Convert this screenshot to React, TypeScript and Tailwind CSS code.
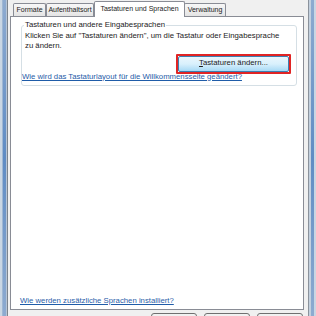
import React from "react";

const font = { fontFamily: '"Liberation Sans", Arial, sans-serif' };

function Tab({ label, active }: { label: string; active?: boolean }) {
  if (active) {
    return (
      <div className="relative z-10 -mb-px flex h-[16px] w-[91px] items-center justify-center rounded-t-[2px] border border-b-0 border-[#898c95] bg-white">
        {label}
      </div>
    );
  }
  return (
    <div className="-mr-px flex h-[13px] w-full items-center justify-center whitespace-nowrap rounded-t-[2px] border border-b-0 border-[#898c95] bg-linear-to-b from-[#f7f7f7] to-[#e4e4e4]">
      {label}
    </div>
  );
}

export default function App() {
  return (
    <div
      className="flex h-[316px] w-[316px] overflow-hidden bg-[#f0f0f0] text-[7.75px] leading-[10.5px] text-[#1b1b1b]"
      style={font}
    >
      {/* Left frame */}
      <div className="flex h-full w-[8px] shrink-0">
        <div className="w-[2px] bg-[#cad7e4]" />
        <div className="w-[1px] bg-[#9fb7d3]" />
        <div className="w-[3px] bg-linear-to-b from-[#8eabd0] via-[#5f8cc4] to-[#8eabd0]" />
        <div className="w-[1px] bg-[#b6c5d6]" />
        <div className="w-[1px] bg-[#7c848e]" />
      </div>

      {/* Dialog body */}
      <div className="flex w-[300px] shrink-0 flex-col pl-[2px] pr-[4px]">
        {/* Tabs */}
        <div className="flex h-[16px] shrink-0 items-end pl-[3px] text-[7px]">
          <div className="flex w-[33px] items-end">
            <Tab label="Formate" />
          </div>
          <div className="flex w-[48px] items-end">
            <Tab label="Aufenthaltsort" />
          </div>
          <Tab label="Tastaturen und Sprachen" active />
          <div className="-ml-px flex w-[42px] items-end">
            <Tab label="Verwaltung" />
          </div>
        </div>

        {/* Panel */}
        <div className="flex h-[294px] shrink-0 flex-col border border-[#898c95] bg-white">
          <fieldset className="ml-[10px] mr-[6px] mt-[3px] rounded-[3px] border border-[#d5dfe5] pb-[3px] pl-[3px]">
            <legend className="-ml-px px-px">Tastaturen und andere Eingabesprachen</legend>
            <p className="pr-[6px]">
              Klicken Sie auf "Tastaturen ändern", um die Tastatur oder Eingabesprache
              <br />
              zu ändern.
            </p>

            <div className="mt-[2px] flex justify-end pr-[5px]">
              <div className="rounded-[1px] border-2 border-[#e02424]">
                <button className="flex h-[16px] w-[111px] items-center justify-center rounded-[2px] border border-[#3c7fb1] bg-linear-to-b from-[#eaf6fd] via-[#d9f0fc] to-[#a7d9f5] text-[#1b1b1b]">
                  <span>
                    <span className="underline">T</span>astaturen ändern...
                  </span>
                </button>
              </div>
            </div>

            <a className="-ml-[3px] -mt-[2px] block w-fit text-[#1f5ca8] underline">
              Wie wird das Tastaturlayout für die Willkommensseite geändert?
            </a>
          </fieldset>

          <a className="mb-[3px] ml-[9px] mt-auto block w-fit text-[#1f5ca8] underline">
            Wie werden zusätzliche Sprachen installiert?
          </a>
        </div>

        {/* Dialog buttons (cut off) */}
        <div className="mt-[3px] flex shrink-0 justify-end gap-[7px] pr-[1px]">
          <div className="h-[20px] w-[46px] rounded-[3px] border border-[#707070] bg-linear-to-b from-[#f2f2f2] to-[#e6e6e6]" />
          <div className="h-[20px] w-[46px] rounded-[3px] border border-[#707070] bg-linear-to-b from-[#f2f2f2] to-[#e6e6e6]" />
          <div className="h-[20px] w-[46px] rounded-[3px] border border-[#707070] bg-linear-to-b from-[#f2f2f2] to-[#e6e6e6]" />
        </div>
      </div>

      {/* Right frame */}
      <div className="flex h-full w-[8px] shrink-0">
        <div className="w-[1px] bg-[#8a929c]" />
        <div className="w-[2px] bg-[#c3d0de]" />
        <div className="w-[3px] bg-linear-to-b from-[#8eabd0] via-[#5f8cc4] to-[#8eabd0]" />
        <div className="w-[2px] bg-[#c9d6e3]" />
      </div>
    </div>
  );
}
